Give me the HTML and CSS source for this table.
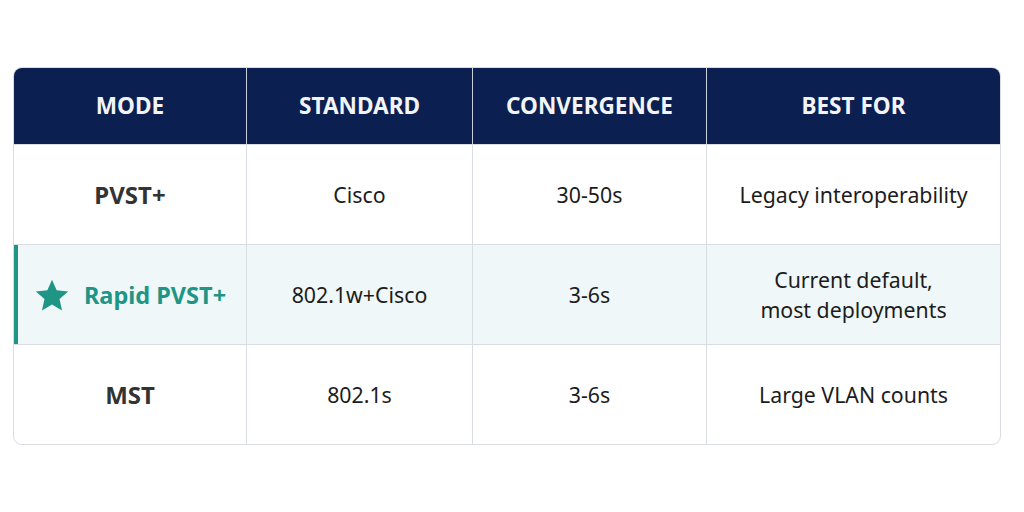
FILE: index.html
```html
<!DOCTYPE html>
<html>
<head>
<meta charset="utf-8">
<link rel="stylesheet" href="styles.css">
</head>
<body>
<div class="page">
  <div class="table">
    <div class="row head">
      <div class="cell">MODE</div>
      <div class="cell">STANDARD</div>
      <div class="cell">CONVERGENCE</div>
      <div class="cell">BEST FOR</div>
    </div>
    <div class="row">
      <div class="cell mode">PVST+</div>
      <div class="cell">Cisco</div>
      <div class="cell">30-50s</div>
      <div class="cell">Legacy interoperability</div>
    </div>
    <div class="row hl">
      <div class="cell mode"><svg class="star" viewBox="0 0 24 24" width="36" height="36"><path d="M12 1.8l3.1 7.1 7.7.7-5.8 5.1 1.7 7.6L12 18.3l-6.7 4 1.7-7.6L1.2 9.6l7.7-.7z" fill="#1e9585"/></svg><span>Rapid PVST+</span></div>
      <div class="cell">802.1w+Cisco</div>
      <div class="cell">3-6s</div>
      <div class="cell">Current default,<br>most deployments</div>
    </div>
    <div class="row">
      <div class="cell mode">MST</div>
      <div class="cell">802.1s</div>
      <div class="cell">3-6s</div>
      <div class="cell">Large VLAN counts</div>
    </div>
  </div>
</div>
</body>
</html>
```

FILE: styles.css
```css
html, body {
  margin: 0;
  padding: 0;
  background: #ffffff;
}
.page {
  width: 1024px;
  height: 512px;
  padding: 67px 0 0 13px;
  box-sizing: border-box;
  font-family: "Noto Sans", "Open Sans", sans-serif;
}
.table {
  width: 988px;
  border: 1px solid #d9dde2;
  border-radius: 9px;
  overflow: hidden;
  box-sizing: border-box;
}
.row {
  display: grid;
  grid-template-columns: 232px 226px 234px 1fr;
  height: 100px;
  border-top: 1px solid #d9dde2;
  box-sizing: border-box;
}
.row.head {
  height: 76px;
  border-top: none;
  background: #0b1f50;
}
.cell {
  display: flex;
  align-items: center;
  justify-content: center;
  text-align: center;
  font-size: 21.3px;
  line-height: 30px;
  color: #1c1c1c;
  border-left: 1px solid #d9dde2;
}
.cell:first-child {
  border-left: none;
}
.head .cell {
  color: #f2f4f8;
  font-weight: 700;
  font-size: 22.6px;
  border-left-color: #c9cfdb;
}
.mode {
  font-weight: 700;
  color: #333333;
  font-size: 24px;
}
.row.hl {
  background: #eff7f8;
  box-shadow: inset 4px 0 0 #1e9585;
}
.hl .mode {
  color: #1e9585;
  font-size: 23.5px;
  gap: 14px;
  padding-left: 0;
}
.star {
  display: block;
}
```
